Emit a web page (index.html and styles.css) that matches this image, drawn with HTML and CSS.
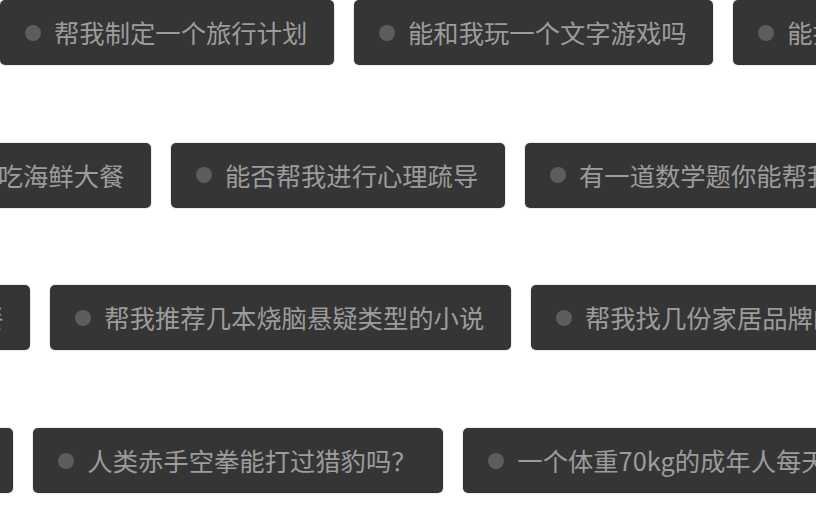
FILE: index.html
```html
<!DOCTYPE html>
<html lang="zh-CN">
<head>
<meta charset="utf-8">
<link rel="stylesheet" href="styles.css">
</head>
<body>
<div class="board">
  <div class="row row-1">
    <div class="chip"><span class="dot"></span><span class="label">帮我制定一个旅行计划</span></div>
    <div class="chip"><span class="dot"></span><span class="label">能和我玩一个文字游戏吗</span></div>
    <div class="chip"><span class="dot"></span><span class="label">能推荐几部好看的电影吗</span></div>
  </div>
  <div class="row row-2">
    <div class="chip"><span class="dot"></span><span class="label">周末去哪里吃海鲜大餐</span></div>
    <div class="chip"><span class="dot"></span><span class="label">能否帮我进行心理疏导</span></div>
    <div class="chip"><span class="dot"></span><span class="label">有一道数学题你能帮我解答吗</span></div>
  </div>
  <div class="row row-3">
    <div class="chip"><span class="dot"></span><span class="label">帮我规划一顿健康的午餐</span></div>
    <div class="chip"><span class="dot"></span><span class="label">帮我推荐几本烧脑悬疑类型的小说</span></div>
    <div class="chip"><span class="dot"></span><span class="label">帮我找几份家居品牌的资料</span></div>
  </div>
  <div class="row row-4">
    <div class="chip"><span class="dot"></span><span class="label">怎样才能快速入睡</span></div>
    <div class="chip"><span class="dot"></span><span class="label">人类赤手空拳能打过猎豹吗？</span></div>
    <div class="chip"><span class="dot"></span><span class="label">一个体重70kg的成年人每天需要喝多少水</span></div>
  </div>
</div>
</body>
</html>
```

FILE: styles.css
```css
html, body {
  margin: 0;
  padding: 0;
  background: #ffffff;
  overflow: hidden;
}

body {
  width: 816px;
  height: 507px;
  font-family: "Noto Sans CJK SC", "Noto Sans", sans-serif;
}

.board {
  display: flex;
  flex-direction: column;
  gap: 77.7px;
}

.row {
  display: flex;
  flex-wrap: nowrap;
  gap: 20px;
  white-space: nowrap;
}

.row-1 { margin-left: 0; }
.row-2 { margin-left: -183px; }
.row-3 { margin-left: -329px; }
.row-4 { margin-left: -270px; }

.chip {
  flex: none;
  box-sizing: border-box;
  height: 65px;
  display: flex;
  align-items: center;
  gap: 13px;
  padding: 0 26.7px 0 25px;
  background: #353535;
  border-radius: 5px;
  box-shadow: 0 0 0 1px rgba(0, 0, 0, 0.08);
}

.dot {
  flex: none;
  width: 16px;
  height: 16px;
  border-radius: 50%;
  background: #5d5d5d;
}

.label {
  font-size: 25.33px;
  line-height: 33px;
  color: #9c9c9c;
}
```
